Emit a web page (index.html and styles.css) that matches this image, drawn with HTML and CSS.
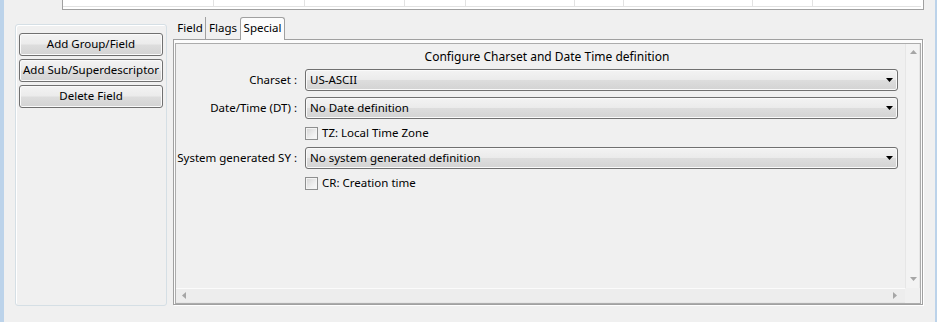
FILE: index.html
```html
<!DOCTYPE html>
<html>
<head>
<meta charset="utf-8">
<link rel="stylesheet" href="styles.css">
</head>
<body>
<div class="window">
  <div class="edge-left"></div>
  <div class="main">
    <div class="table-strip">
      <div class="table-row">
        <div class="cell c1"></div>
        <div class="cell c2"></div>
        <div class="cell c3"></div>
        <div class="cell c4"></div>
        <div class="cell c5"></div>
        <div class="cell c6"></div>
        <div class="cell c7"></div>
        <div class="cell c8"></div>
        <div class="cell-last"></div>
      </div>
    </div>
    <div class="work">
      <div class="side">
        <div class="btn">Add Group/Field</div>
        <div class="btn">Add Sub/Superdescriptor</div>
        <div class="btn">Delete Field</div>
      </div>
      <div class="tabs">
        <div class="tab-strip">
          <div class="tab tab-field">Field</div>
          <div class="tab tab-flags">Flags</div>
          <div class="tab tab-special active">Special</div>
        </div>
        <div class="pane">
          <div class="scroll">
            <div class="viewport">
              <div class="title">Configure Charset and Date Time definition</div>
              <div class="form">
                <div class="label">Charset :</div>
                <div class="combo"><span>US-ASCII</span><svg class="arrow" width="7" height="4" viewBox="0 0 7 4"><path d="M0 0H7L3.5 4Z" fill="#000"/></svg></div>
                <div class="label">Date/Time (DT) :</div>
                <div class="combo"><span>No Date definition</span><svg class="arrow" width="7" height="4" viewBox="0 0 7 4"><path d="M0 0H7L3.5 4Z" fill="#000"/></svg></div>
                <div class="spacer"></div>
                <div class="check"><span class="box"></span><span>TZ: Local Time Zone</span></div>
                <div class="label">System generated SY :</div>
                <div class="combo"><span>No system generated definition</span><svg class="arrow" width="7" height="4" viewBox="0 0 7 4"><path d="M0 0H7L3.5 4Z" fill="#000"/></svg></div>
                <div class="spacer"></div>
                <div class="check"><span class="box"></span><span>CR: Creation time</span></div>
              </div>
            </div>
            <div class="vbar">
              <svg width="7" height="4" viewBox="0 0 7 4"><path d="M0 4H7L3.5 0Z" fill="#a6a6a6"/></svg>
              <svg width="7" height="4" viewBox="0 0 7 4"><path d="M0 0H7L3.5 4Z" fill="#a6a6a6"/></svg>
            </div>
            <div class="hbar">
              <svg width="4" height="7" viewBox="0 0 4 7"><path d="M4 0V7L0 3.5Z" fill="#a6a6a6"/></svg>
              <svg width="4" height="7" viewBox="0 0 4 7"><path d="M0 0V7L4 3.5Z" fill="#a6a6a6"/></svg>
            </div>
            <div class="corner"></div>
          </div>
        </div>
      </div>
    </div>
  </div>
  <div class="edge-right"></div>
</div>
</body>
</html>
```

FILE: styles.css
```css
* { box-sizing: border-box; }
html, body { margin: 0; padding: 0; }
body {
  width: 937px;
  height: 322px;
  overflow: hidden;
  background: #f0f0f0;
  font-family: "Noto Sans", "Open Sans", sans-serif;
  font-size: 11.5px;
  color: #000;
}
.window { display: flex; height: 322px; }
.edge-left { width: 4px; background: #bcd3ea; flex: none; }
.edge-right { width: 2px; background: #bcd3ea; flex: none; }
.main { flex: 1; display: flex; flex-direction: column; }

.table-strip {
  margin-left: 58px;
  width: 862px;
  height: 10px;
  background: #fff;
  border-left: 1px solid #a0a0a0;
  border-right: 1px solid #a0a0a0;
  border-bottom: 1px solid #a0a0a0;
}
.table-row { display: flex; height: 7px; border-bottom: 1px solid #e2e2e2; margin-right: 2px; }
.cell { flex: none; height: 100%; border-right: 1px solid #e2e2e2; }
.cell-last { flex: 1; }
.c1 { width: 151px; }
.c2 { width: 91px; }
.c3 { width: 100px; }
.c4 { width: 61px; }
.c5 { width: 109px; }
.c6 { width: 49px; }
.c7 { width: 129px; }
.c8 { width: 60px; }

.work { display: flex; align-items: flex-start; margin-top: 7px; }

.side {
  flex: none;
  margin-left: 11px;
  margin-top: 7px;
  width: 152px;
  height: 282px;
  border: 1px solid #d5dfe5;
  border-radius: 3px;
  box-shadow: inset 1px 1px 0 #fff;
  padding: 8px 3px 0 3px;
  display: flex;
  flex-direction: column;
  gap: 3px;
}
.btn {
  height: 23px;
  border: 1px solid #707070;
  border-radius: 3px;
  background: linear-gradient(#f3f3f3 0%, #ebebeb 48%, #dddddd 52%, #d3d3d3 100%);
  box-shadow: inset 0 0 0 1px #fafafa;
  text-align: center;
  line-height: 20px;
  white-space: nowrap;
}

.tabs { flex: none; margin-left: 6px; width: 750px; }
.tab-strip { display: flex; height: 22px; padding-left: 2px; align-items: flex-end; }
.tab {
  height: 22px;
  padding-top: 3px;
  line-height: 16px;
  text-align: center;
}
.tab-field { width: 31px; border-right: 1px solid #a0a0a0; }
.tab-flags { width: 34px; }
.tab-special { width: 45px; }
.tab.active {
  height: 23px;
  margin-bottom: -1px;
  padding-top: 2px;
  background: #fcfcfc;
  border: 1px solid #a0a0a0;
  border-bottom: none;
  border-radius: 3px 3px 0 0;
  position: relative;
  z-index: 1;
}

.pane {
  height: 266px;
  border: 1px solid #a0a0a0;
  padding: 3px 1px 0 1px;
  background: #fcfcfc;
  box-shadow: 1px 1px 0 #fff;
}
.scroll {
  height: 100%;
  border: 1px solid #acacac;
  background: #f0f0f0;
  display: grid;
  grid-template-columns: 1fr 15px;
  grid-template-rows: 1fr 15px;
}
.viewport { padding-top: 5px; overflow: hidden; }
.title { text-align: center; font-size: 12px; line-height: 16px; height: 16px; padding-left: 13px; }
.form {
  margin-top: 4px;
  display: grid;
  grid-template-columns: 121px 593px;
  grid-template-rows: 22px 22px 16px 22px 16px;
  column-gap: 8px;
  row-gap: 6px;
}
.label { text-align: right; line-height: 22px; white-space: nowrap; }
.combo {
  border: 1px solid #707070;
  border-radius: 3px;
  background: linear-gradient(#f3f3f3 0%, #ebebeb 48%, #dddddd 52%, #d3d3d3 100%);
  box-shadow: inset 0 0 0 1px #fafafa;
  display: flex;
  align-items: center;
  justify-content: space-between;
  padding: 0 4px 0 4px;
  line-height: 20px;
}
.arrow { flex: none; }
.check { display: flex; align-items: center; gap: 4px; line-height: 16px; }
.box {
  width: 13px;
  height: 13px;
  border: 1px solid #8e8f8f;
  background: linear-gradient(135deg, #d4d4d4 0%, #eeeeee 60%, #fbfbfb 100%);
  box-shadow: inset 0 0 0 1px #f4f4f4;
  flex: none;
}

.vbar {
  background: linear-gradient(to right, #e6e6e6 0, #e6e6e6 1px, #f3f3f3 1px, #f3f3f3 14px, #e6e6e6 14px);
  display: flex;
  flex-direction: column;
  justify-content: space-between;
  align-items: center;
  padding: 6px 0 7px 1px;
}
.hbar {
  background: linear-gradient(#fbfbfb 0, #fbfbfb 1px, #ededed 1px, #ededed 14px, #e6e6e6 14px);
  display: flex;
  justify-content: space-between;
  align-items: center;
  padding: 0 8px 0 6px;
}
.corner { background: #f0f0f0; }
```
